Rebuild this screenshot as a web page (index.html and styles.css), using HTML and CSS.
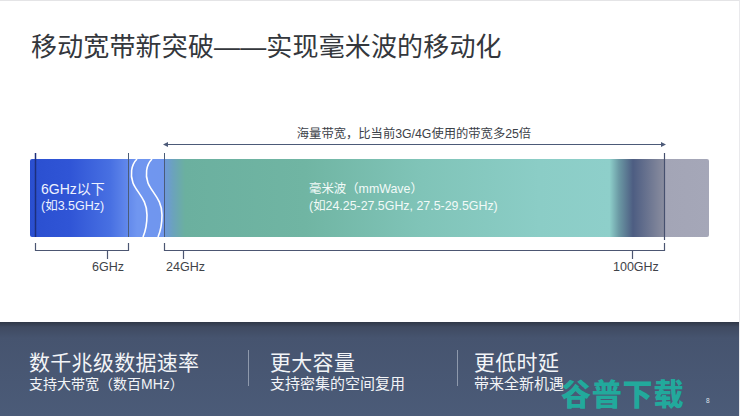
FILE: index.html
```html
<!DOCTYPE html>
<html lang="zh">
<head>
<meta charset="utf-8">
<title>移动宽带新突破</title>
<link rel="stylesheet" href="styles.css">
</head>
<body>
<main class="slide">
  <h1 class="title">移动宽带新突破——实现毫米波的移动化</h1>
  <section class="diagram">
    <div class="span-label">海量带宽，比当前3G/4G使用的带宽多25倍</div>
    <div class="bar">
      <div class="bar-low"></div>
      <div class="bar-high"></div>
      <div class="bar-end"></div>
    </div>
    <svg class="overlay" width="740" height="136" viewBox="0 0 740 136">
      <path class="line" d="M165 5.500H664"/>
      <path class="head" d="M163 5.500l5-2.500v5zM666 5.500l-5-2.500v5z"/>
      <path class="wave" d="M137 20C131 26 130 36 133 44C137 54 147 60 147 76C147 85 146 91 143 98"/>
      <path class="wave" d="M152 20C146 26 145 36 148 44C152 54 162 60 162 76C162 85 161 91 158 98"/>
      <path class="tick tick-dark" d="M35.500 14V98"/>
      <path class="tick" d="M128.500 14V98"/>
      <path class="tick" d="M164.500 14V98"/>
      <path class="tick tick-end" d="M664.500 14V101"/>
      <path class="bracket" d="M35.500 104V111.500H128.500V104M107.500 111.500V120"/>
      <path class="bracket" d="M164.500 104V111.500H664.500V104M183.500 111.500V120M632.500 111.500V120"/>
    </svg>
    <div class="band-low">
      <div class="band-name">6GHz以下</div>
      <div class="band-note">(如3.5GHz)</div>
    </div>
    <div class="band-high">
      <div class="band-high-line">毫米波（mmWave）</div>
      <div class="band-high-line">(如24.25-27.5GHz, 27.5-29.5GHz)</div>
    </div>
    <div class="freq freq-6">6GHz</div>
    <div class="freq freq-24">24GHz</div>
    <div class="freq freq-100">100GHz</div>
  </section>
  <footer class="band">
    <div class="point point-a">
      <div class="point-title">数千兆级数据速率</div>
      <div class="point-sub">支持大带宽（数百MHz）</div>
    </div>
    <div class="divider"></div>
    <div class="point point-b">
      <div class="point-title">更大容量</div>
      <div class="point-sub point-sub-wide">支持密集的空间复用</div>
    </div>
    <div class="divider"></div>
    <div class="point point-c">
      <div class="point-title">更低时延</div>
      <div class="point-sub point-sub-wide">带来全新机遇</div>
    </div>
    <div class="watermark">谷普下载</div>
    <div class="page-no">8</div>
  </footer>
</main>
</body>
</html>
```
FILE: styles.css
```css
* { box-sizing: border-box; margin: 0; padding: 0; }
html, body { width: 740px; height: 416px; overflow: hidden; background: #fff; }
body { font-family: "Liberation Sans", "Noto Sans CJK SC", sans-serif; }
.slide {
  width: 740px;
  height: 416px;
  display: flex;
  flex-direction: column;
  border-top: 1px solid #e4e4e6;
  border-right: 1px solid #e9e9ec;
}
.title {
  height: 107px;
  padding: 27px 0 0 31px;
  font-family: "Liberation Sans", "Noto Sans CJK SC", sans-serif;
  font-size: 26px;
  line-height: 38px;
  font-weight: 400;
  letter-spacing: 0.150px;
  color: #34373c;
}
.diagram { position: relative; height: 214px; }
.span-label {
  position: absolute;
  left: 164px;
  width: 500px;
  top: 18px;
  text-align: center;
  font-size: 12.300px;
  line-height: 17px;
  color: #3c4148;
}
.line { stroke: #4c5a78; stroke-width: 1.200; fill: none; }
.head { fill: #4c5a78; }
.bar {
  position: absolute;
  left: 30px;
  top: 51px;
  width: 679px;
  height: 78px;
  display: flex;
  border-radius: 2px;
  overflow: hidden;
}
.bar-low {
  width: 134px;
  background: linear-gradient(90deg, #2a4fd0 0%, #3055d6 30%, #4870e2 60%, #7096f0 80%, #7096ee 100%);
}
.bar-high {
  width: 469px;
  background: linear-gradient(90deg, #6e97dc 0%, #6ba3bb 2%, #6bb09f 4.500%, #70b5a3 30%, #80c4b8 55%, #8bcdc6 80%, #8ecfca 95%, #6b99a4 97%, #4d5d82 100%);
}
.bar-end {
  flex: 1;
  background: linear-gradient(90deg, #4d5d82 0%, #8a8d9f 41%, #a3a5b6 42%, #a5a7b8 100%);
}
.overlay { position: absolute; left: 0; top: 31px; }
.wave { fill: none; stroke: #fff; stroke-width: 1.600; }
.tick { fill: none; stroke: #4a5c78; stroke-width: 1; }
.tick-dark { stroke: #1d2f7c; stroke-width: 1.500; }
.tick-end { stroke: #46506e; stroke-width: 1.200; }
.bracket { fill: none; stroke: #4c5672; stroke-width: 1.200; }
.band-low {
  position: absolute;
  left: 41px;
  top: 72px;
  color: #eef2ff;
}
.band-name { font-size: 14px; line-height: 18px; }
.band-note { font-size: 12.500px; line-height: 17px; }
.band-high {
  position: absolute;
  left: 309px;
  top: 73px;
  color: #f2faf8;
  font-size: 12.400px;
  line-height: 17px;
}
.freq {
  position: absolute;
  top: 151px;
  font-size: 12.500px;
  line-height: 16px;
  color: #3f4349;
}
.freq-6 { left: 92px; }
.freq-24 { left: 166px; }
.freq-100 { left: 613px; }
.band {
  position: relative;
  flex: 1;
  display: flex;
  align-items: flex-start;
  background: linear-gradient(180deg, #2f3747 0, #3f4a61 5px, #46546f 16px, #4b5b78 100%);
  color: #f2f4f7;
}
.point-title {
  font-family: "Noto Sans CJK SC", sans-serif;
  font-size: 21px;
  line-height: 28px;
  margin-top: 25px;
  letter-spacing: 0.300px;
}
.point-sub {
  font-size: 14px;
  line-height: 18px;
}
.point-sub-wide { font-size: 15px; }
.point-a { width: 248px; padding-left: 29px; }
.point-b { width: 208px; padding-left: 21px; }
.point-c { padding-left: 16px; }
.divider {
  width: 1px;
  height: 36px;
  margin-top: 28px;
  background: #8e99ac;
}
.watermark {
  position: absolute;
  left: 561px;
  top: 53px;
  font-family: "Noto Sans CJK SC", sans-serif;
  font-size: 30px;
  line-height: 34px;
  font-weight: 900;
  color: #22a99c;
  letter-spacing: 0.800px;
  white-space: nowrap;
}
.page-no {
  position: absolute;
  left: 706px;
  top: 74px;
  font-size: 6.500px;
  line-height: 10px;
  color: #dfe4ec;
}
```
